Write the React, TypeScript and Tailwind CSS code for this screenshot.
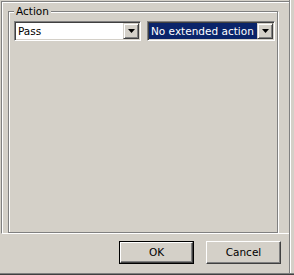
const font = { fontFamily: '"DejaVu Sans", "Liberation Sans", sans-serif' };

function DropArrow() {
  return (
    <div className="w-[16px] h-full shrink-0 flex items-center justify-center border border-t-[#d4d0c8] border-l-[#d4d0c8] border-r-[#404040] border-b-[#404040] bg-[#d4d0c8] shadow-[inset_1px_1px_0_#fff,inset_-1px_-1px_0_#808080]">
      <svg width="7" height="4" viewBox="0 0 7 4">
        <polygon points="0,0 7,0 3.5,4" fill="#000" />
      </svg>
    </div>
  );
}

function Combo({ value, focused, width }: { value: string; focused?: boolean; width: string }) {
  return (
    <div
      className={`${width} h-[20px] p-[1px] flex border border-t-[#808080] border-l-[#808080] border-r-white border-b-white shadow-[inset_1px_1px_0_#404040,inset_-1px_-1px_0_#d4d0c8] bg-white`}
    >
      <div
        className={`flex-1 min-w-0 flex items-center pl-[2px] text-[10.5px] leading-none whitespace-nowrap ${
          focused ? 'bg-[#0a246a] text-white' : 'bg-white text-black'
        }`}
      >
        {value}
      </div>
      <DropArrow />
    </div>
  );
}

function Button({ label, isDefault }: { label: string; isDefault?: boolean }) {
  const face = (
    <div className="w-full h-full flex items-center justify-center border border-t-white border-l-white border-r-[#404040] border-b-[#404040] shadow-[inset_-1px_-1px_0_#808080] text-[10.5px] text-black">
      {label}
    </div>
  );
  return isDefault ? (
    <div className="w-[75px] h-[23px] border border-black">{face}</div>
  ) : (
    <div className="w-[75px] h-[23px]">{face}</div>
  );
}

export default function App() {
  return (
    <div className="w-[294px] h-[275px] bg-[#d4d0c8] flex flex-col overflow-hidden" style={font}>
      <div className="flex-1 flex">
        <div className="w-[289px] flex flex-col">
          <div className="pt-[1px] pl-[1px]">
            {/* outer page frame: etched top/left, white bottom */}
            <div className="w-[288px] h-[233px] border-t border-l border-t-[#808080] border-l-[#808080] border-b border-b-white shadow-[inset_1px_1px_0_#fff]">
              <div className="ml-[6px] mt-[9px] w-[270px] h-[222px] relative border border-[#808080] shadow-[inset_1px_1px_0_#fff,1px_1px_0_#fff] pt-[9px] pl-[5px]">
                <span className="absolute left-[5px] top-[-8px] px-[2px] bg-[#d4d0c8] text-[10.5px] leading-[14px] text-black">
                  Action
                </span>
                <div className="flex gap-[6px]">
                  <Combo value="Pass" width="w-[127px]" />
                  <Combo value="No extended action" width="w-[128px]" focused />
                </div>
              </div>
            </div>
          </div>
          <div className="mt-[7px] pr-[8px] flex justify-end gap-[12px]">
            <Button label="OK" isDefault />
            <Button label="Cancel" />
          </div>
        </div>
        <div className="w-px bg-[#808080]" />
        <div className="w-px bg-white" />
      </div>
      <div className="h-px bg-[#808080]" />
      <div className="h-px bg-[#404040]" />
    </div>
  );
}
